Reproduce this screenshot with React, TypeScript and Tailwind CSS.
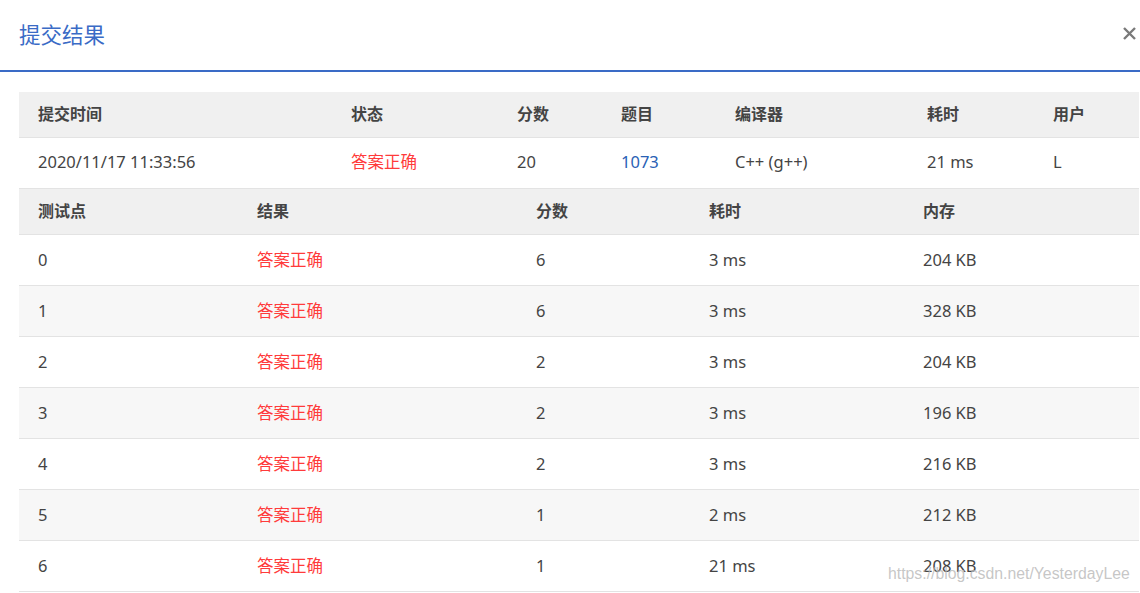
const font = { fontFamily: '"Noto Sans", "Noto Sans CJK SC", sans-serif' };

const cases = [
  { id: 0, score: 6, time: '3 ms', mem: '204 KB' },
  { id: 1, score: 6, time: '3 ms', mem: '328 KB' },
  { id: 2, score: 2, time: '3 ms', mem: '204 KB' },
  { id: 3, score: 2, time: '3 ms', mem: '196 KB' },
  { id: 4, score: 2, time: '3 ms', mem: '216 KB' },
  { id: 5, score: 1, time: '2 ms', mem: '212 KB' },
  { id: 6, score: 1, time: '21 ms', mem: '208 KB' },
];

export default function App() {
  return (
    <div className="relative h-[593px] w-[1140px] overflow-hidden bg-white text-[16px] text-[#333]" style={font}>
      <div className="flex h-[70px] items-center justify-between pl-[19px] pr-[4px]">
        <h1 className="text-[21.5px] font-normal text-[#3a6bc6]">提交结果</h1>
        <svg width="13" height="13" viewBox="0 0 13 13" className="mb-[4px]">
          <path d="M1 1 L12 12 M12 1 L1 12" stroke="#7a7a7a" strokeWidth="2.4" />
        </svg>
      </div>
      <div className="h-[2px] bg-[#3a6bc6]" />

      <div className="ml-[19px] mt-[20px] w-[1120px]">
        <table className="w-full table-fixed border-collapse">
          <colgroup>
            <col className="w-[313px]" />
            <col className="w-[166px]" />
            <col className="w-[104px]" />
            <col className="w-[114px]" />
            <col className="w-[192px]" />
            <col className="w-[126px]" />
            <col />
          </colgroup>
          <thead>
            <tr className="h-[45px] border-b border-[#e3e3e3] bg-[#f0f0f0] text-left text-[#444]">
              <th className="pl-[19px] font-bold">提交时间</th>
              <th className="pl-[19px] font-bold">状态</th>
              <th className="pl-[19px] font-bold">分数</th>
              <th className="pl-[19px] font-bold">题目</th>
              <th className="pl-[19px] font-bold">编译器</th>
              <th className="pl-[19px] font-bold">耗时</th>
              <th className="pl-[19px] font-bold">用户</th>
            </tr>
          </thead>
          <tbody>
            <tr className="h-[51px] border-b border-[#e3e3e3] text-[16.5px] text-[#444]">
              <td className="pl-[19px]">2020/11/17 11:33:56</td>
              <td className="pl-[19px] text-[#ff3b3b]">答案正确</td>
              <td className="pl-[19px]">20</td>
              <td className="pl-[19px] text-[#2a62b5]">1073</td>
              <td className="pl-[19px]">C++ (g++)</td>
              <td className="pl-[19px]">21 ms</td>
              <td className="pl-[19px]">L</td>
            </tr>
          </tbody>
        </table>

        <table className="w-full table-fixed border-collapse">
          <colgroup>
            <col className="w-[219px]" />
            <col className="w-[279px]" />
            <col className="w-[173px]" />
            <col className="w-[214px]" />
            <col />
          </colgroup>
          <thead>
            <tr className="h-[46px] border-b border-[#e3e3e3] bg-[#f0f0f0] text-left text-[#444]">
              <th className="pl-[19px] font-bold">测试点</th>
              <th className="pl-[19px] font-bold">结果</th>
              <th className="pl-[19px] font-bold">分数</th>
              <th className="pl-[19px] font-bold">耗时</th>
              <th className="pl-[19px] font-bold">内存</th>
            </tr>
          </thead>
          <tbody>
            {cases.map((c) => (
              <tr
                key={c.id}
                className={`h-[51px] border-b border-[#e3e3e3] text-[16.5px] text-[#444] ${c.id % 2 === 1 ? 'bg-[#f7f7f7]' : 'bg-white'}`}
              >
                <td className="pl-[19px]">{c.id}</td>
                <td className="pl-[19px] text-[#ff3b3b]">答案正确</td>
                <td className="pl-[19px]">{c.score}</td>
                <td className="pl-[19px]">{c.time}</td>
                <td className="pl-[19px]">{c.mem}</td>
              </tr>
            ))}
          </tbody>
        </table>
      </div>

      <div
        className="pointer-events-none absolute left-[888px] top-[562px] text-[15.8px] text-[#b8b8b8]/80"
        style={{ fontFamily: '"Liberation Sans", Arial, sans-serif' }}
      >
        https://blog.csdn.net/YesterdayLee
      </div>
    </div>
  );
}
